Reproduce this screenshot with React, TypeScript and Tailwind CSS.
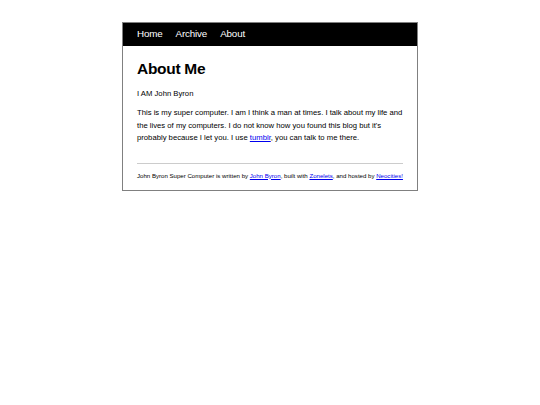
export default function App() {
  return (
    <div className="w-[540px] h-[405px] bg-white pt-[22px]" style={{ fontFamily: '"Liberation Sans", Arial, sans-serif' }}>
      <div className="mx-auto w-[296px] border border-[#808080] text-black">
        <nav className="bg-black h-[23px] flex items-center gap-[13px] px-[14px] text-white text-[9.8px] tracking-[-0.15px]">
          <a>Home</a>
          <a>Archive</a>
          <a>About</a>
        </nav>
        <div className="px-[14px] pt-[14px] pb-[10px]">
          <h1 className="text-[15.5px] font-bold leading-[18px] tracking-[-0.3px] m-0">About Me</h1>
          <p className="text-[7.7px] leading-[12.5px] mt-[10px]">I AM John Byron</p>
          <p className="text-[7.7px] leading-[12.5px] mt-[6.5px]">
            This is my super computer. I am I think a man at times. I talk about my life and the lives of my computers. I do not know how you found this blog but it's probably because I let you. I use{" "}
            <a className="text-[#0000ee] underline">tumblr</a>, you can talk to me there.
          </p>
          <hr className="mt-[18.5px] border-t border-[#cccccc]" />
          <p className="text-[6.1px] leading-[8px] mt-[7.5px] whitespace-nowrap">
            John Byron Super Computer is written by <a className="text-[#0000ee] underline">John Byron</a>, built with{" "}
            <a className="text-[#0000ee] underline">Zonelets</a>, and hosted by <a className="text-[#0000ee] underline">Neocities!</a>
          </p>
        </div>
      </div>
    </div>
  );
}
